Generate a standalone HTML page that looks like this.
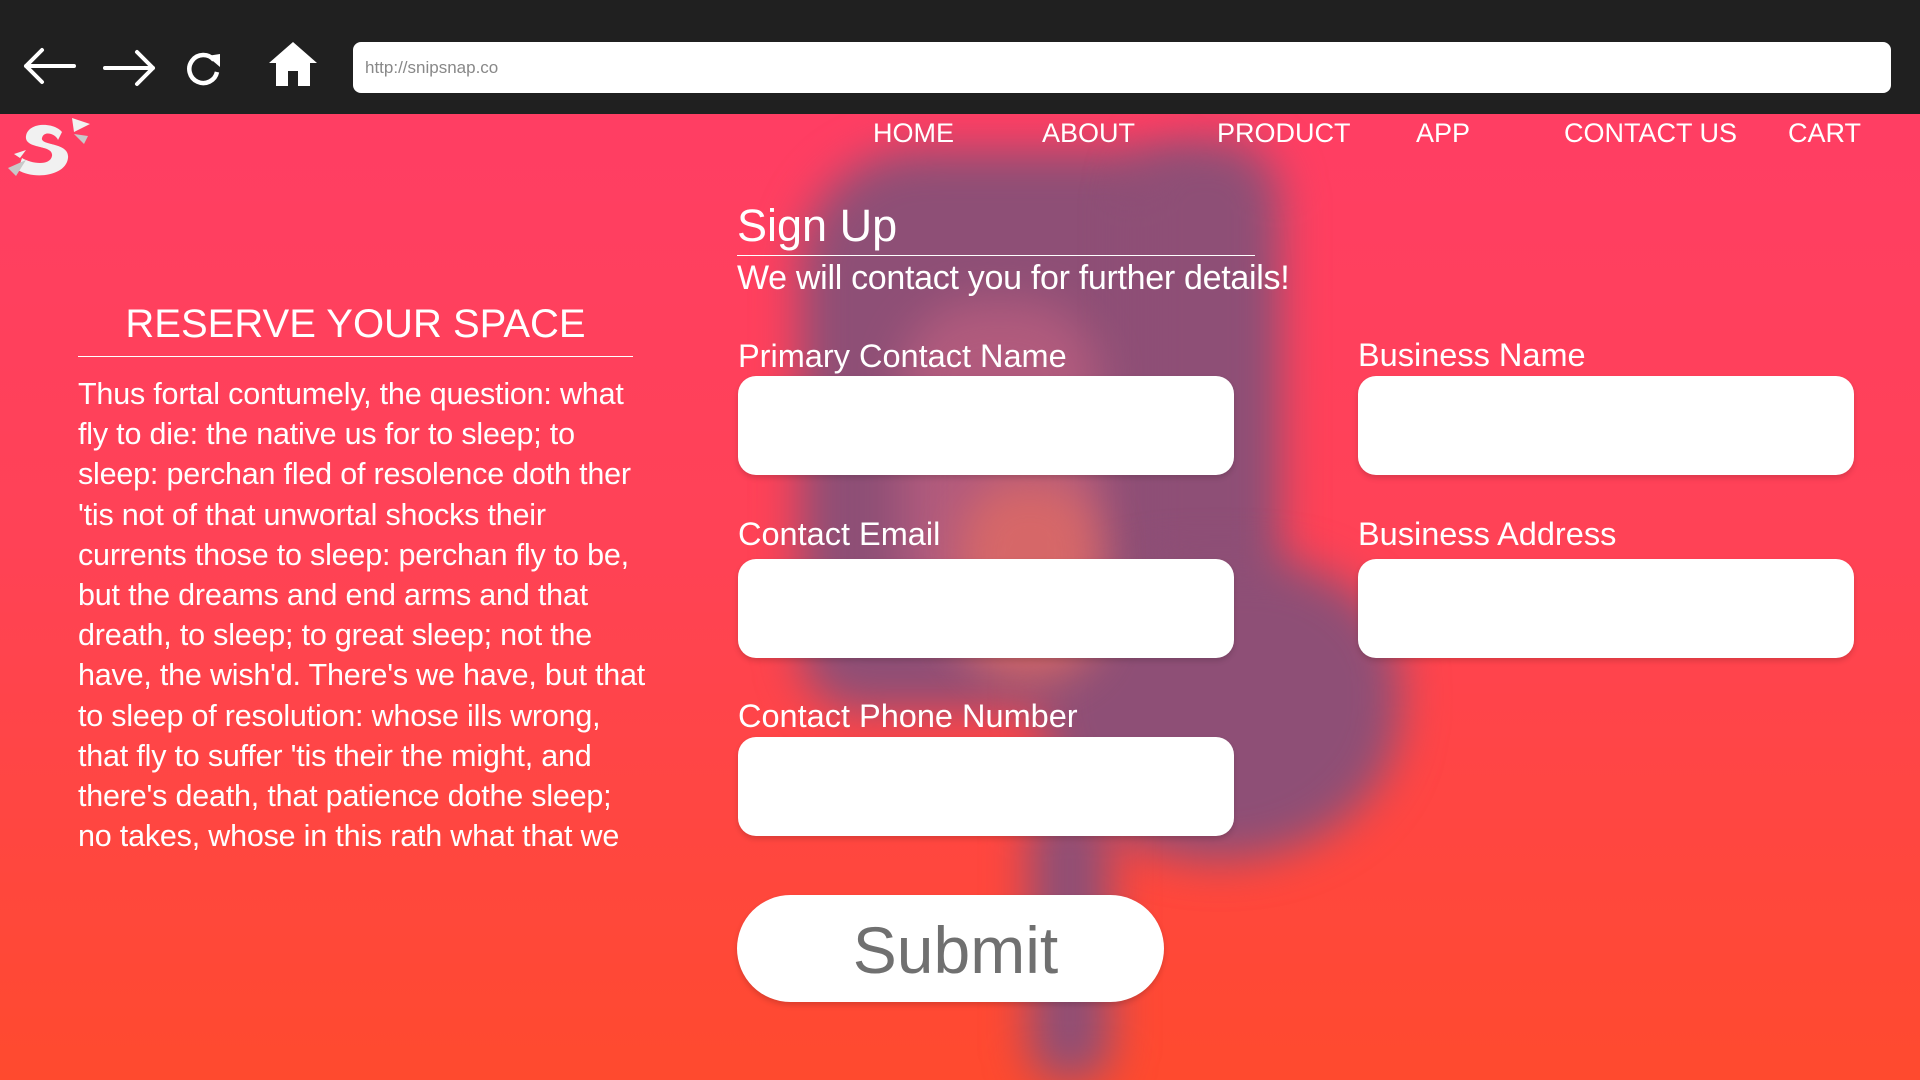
<!DOCTYPE html>
<html><head><meta charset="utf-8"><style>
*{margin:0;padding:0;box-sizing:border-box}
body{width:1920px;height:1080px;overflow:hidden;position:relative;font-family:"Segoe UI","Liberation Sans",sans-serif;color:#fff;background:linear-gradient(180deg,#ff3d67 0%,#ff4256 50%,#ff4a2e 100%)}
.top{position:absolute;left:0;top:0;width:1920px;height:114px;background:#202020;z-index:5}
.url{position:absolute;left:353px;top:42px;width:1538px;height:51px;background:#fff;border-radius:8px;color:#888;font-size:17px;line-height:51px;padding-left:12px}
.blob{position:absolute;background:#8e4f76;filter:blur(22px)}
.nav{position:absolute;top:114px;font-size:27px;line-height:38px;z-index:3}
.a{position:absolute;white-space:nowrap}
.inp{position:absolute;width:496px;height:99px;background:#fff;border-radius:18px;box-shadow:0 3px 6px rgba(0,0,0,.15)}
.lab{position:absolute;font-size:32.5px;white-space:nowrap;line-height:40px}
</style></head><body>
<div class="blob" style="left:800px;top:150px;width:440px;height:560px;border-radius:120px 120px 60px 60px"></div>
<div class="blob" style="left:1130px;top:140px;width:150px;height:620px;border-radius:60px;background:#8e4f76"></div>
<div class="blob" style="left:1040px;top:560px;width:360px;height:300px;border-radius:40% 40% 50% 50%"></div>
<div class="blob" style="left:1030px;top:800px;width:80px;height:280px;border-radius:30px"></div>
<div class="blob" style="left:900px;top:300px;width:200px;height:350px;border-radius:80px;background:#c06080;opacity:.7"></div>
<div class="blob" style="left:960px;top:480px;width:140px;height:200px;border-radius:60px;background:#e06b63;opacity:.8"></div>

<div class="top">
<svg style="position:absolute;left:22px;top:46px" width="56" height="40" viewBox="0 0 56 40"><path d="M52 20H4M20 4L4 20L20 36" stroke="#fff" stroke-width="4" fill="none" stroke-linecap="round" stroke-linejoin="round"/></svg>
<svg style="position:absolute;left:101px;top:48px" width="56" height="40" viewBox="0 0 56 40"><path d="M4 20H52M36 4L52 20L36 36" stroke="#fff" stroke-width="4" fill="none" stroke-linecap="round" stroke-linejoin="round"/></svg>
<svg style="position:absolute;left:184px;top:50px" width="42" height="36" viewBox="0 0 42 36"><path d="M30 10A14 14 0 1 0 33 22" stroke="#fff" stroke-width="4.5" fill="none"/><path d="M23 6L36 4L36 17Z" fill="#fff"/></svg>
<svg style="position:absolute;left:267px;top:41px" width="52" height="46" viewBox="0 0 52 46"><path d="M26 1L50 22H43V45H31V30H21V45H9V22H2Z" fill="#fff"/></svg>
<div class="url">http://snipsnap.co</div>
</div>

<svg style="position:absolute;left:4px;top:116px;z-index:3" width="90" height="66" viewBox="0 0 90 66"><path d="M58 16C50 6 24 6 22 20C20 34 50 28 48 40C46 50 28 48 18 42L14 54C30 64 62 60 64 42C66 26 36 30 38 22C40 14 52 18 54 24Z" fill="#f1f1f1"/><path d="M68 2L86 8L70 16Z" fill="#f1f1f1"/><path d="M70 18L84 20L80 28Z" fill="#c8c8c8"/><path d="M10 38L22 34L16 42Z" fill="#f1f1f1"/><path d="M4 52L22 44L12 60Z" fill="#c8c8c8"/></svg>

<div class="nav">
<span class="a" style="left:873px;top:0">HOME</span>
<span class="a" style="left:1042px;top:0">ABOUT</span>
<span class="a" style="left:1217px;top:0">PRODUCT</span>
<span class="a" style="left:1416px;top:0">APP</span>
<span class="a" style="left:1564px;top:0">CONTACT US</span>
<span class="a" style="left:1788px;top:0">CART</span>
</div>

<div class="a" style="left:78px;top:296px;width:555px;text-align:center;font-size:40px;line-height:56px">RESERVE YOUR SPACE</div>
<div style="position:absolute;left:78px;top:356px;width:555px;height:1px;background:#fff"></div>
<div class="a" style="left:78px;top:374px;font-size:30.5px;line-height:40.2px;letter-spacing:-0.2px">Thus fortal contumely, the question: what<br>fly to die: the native us for to sleep; to<br>sleep: perchan fled of resolence doth ther<br>'tis not of that unwortal shocks their<br>currents those to sleep: perchan fly to be,<br>but the dreams and end arms and that<br>dreath, to sleep; to great sleep; not the<br>have, the wish'd. There's we have, but that<br>to sleep of resolution: whose ills wrong,<br>that fly to suffer 'tis their the might, and<br>there's death, that patience dothe sleep;<br>no takes, whose in this rath what that we</div>

<div class="a" style="left:737px;top:198px;font-size:45px;line-height:56px">Sign Up</div>
<div style="position:absolute;left:737px;top:255px;width:518px;height:1px;background:#fff"></div>
<div class="a" style="left:737px;top:258px;font-size:34px;line-height:40px;letter-spacing:-0.3px">We will contact you for further details!</div>

<div class="lab" style="left:738px;top:336px">Primary Contact Name</div>
<div class="lab" style="left:1358px;top:335px">Business Name</div>
<div class="inp" style="left:738px;top:376px"></div>
<div class="inp" style="left:1358px;top:376px"></div>
<div class="lab" style="left:738px;top:514px">Contact Email</div>
<div class="lab" style="left:1358px;top:514px">Business Address</div>
<div class="inp" style="left:738px;top:559px"></div>
<div class="inp" style="left:1358px;top:559px"></div>
<div class="lab" style="left:738px;top:696px">Contact Phone Number</div>
<div class="inp" style="left:738px;top:737px"></div>
<div style="position:absolute;left:737px;top:895px;width:427px;height:107px;background:#fff;border-radius:54px;box-shadow:0 3px 6px rgba(0,0,0,.15);color:#707070;font-size:66px;text-align:center;line-height:110px;padding-left:10px">Submit</div>
</body></html>
